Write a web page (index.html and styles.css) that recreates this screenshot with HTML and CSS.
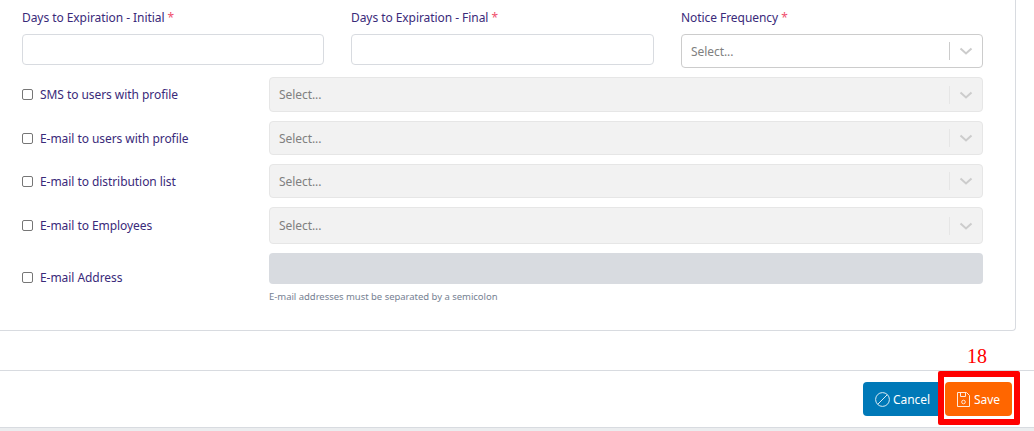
FILE: index.html
```html
<!DOCTYPE html>
<html lang="en">
<head>
<meta charset="utf-8">
<title>Notice settings</title>
<link rel="stylesheet" href="styles.css">
</head>
<body>
<main class="page">
  <section class="card">
    <div class="top-row">
      <div class="field">
        <label class="label">Days to Expiration - Initial <span class="req">*</span></label>
        <div class="input"></div>
      </div>
      <div class="field">
        <label class="label">Days to Expiration - Final <span class="req">*</span></label>
        <div class="input"></div>
      </div>
      <div class="field">
        <label class="label">Notice Frequency <span class="req">*</span></label>
        <div class="select active">
          <span class="ph">Select...</span><span class="sep"></span>
          <svg class="chev" viewBox="0 0 20 20"><path d="M4.5 7.5 10 12.5 15.5 7.5" /></svg>
        </div>
      </div>
    </div>
    <div class="row r1">
      <label class="check"><span class="box"></span>SMS to users with profile</label>
      <div class="select off"><span class="ph">Select...</span><span class="sep"></span><svg class="chev" viewBox="0 0 20 20"><path d="M4.5 7.5 10 12.5 15.5 7.5" /></svg></div>
    </div>
    <div class="row r2">
      <label class="check"><span class="box"></span>E-mail to users with profile</label>
      <div class="select off"><span class="ph">Select...</span><span class="sep"></span><svg class="chev" viewBox="0 0 20 20"><path d="M4.5 7.5 10 12.5 15.5 7.5" /></svg></div>
    </div>
    <div class="row r3">
      <label class="check"><span class="box"></span>E-mail to distribution list</label>
      <div class="select off"><span class="ph">Select...</span><span class="sep"></span><svg class="chev" viewBox="0 0 20 20"><path d="M4.5 7.5 10 12.5 15.5 7.5" /></svg></div>
    </div>
    <div class="row r4">
      <label class="check"><span class="box"></span>E-mail to Employees</label>
      <div class="select off"><span class="ph">Select...</span><span class="sep"></span><svg class="chev" viewBox="0 0 20 20"><path d="M4.5 7.5 10 12.5 15.5 7.5" /></svg></div>
    </div>
    <div class="row r5">
      <label class="check"><span class="box"></span>E-mail Address</label>
      <div class="email-col">
        <div class="input-off"></div>
        <p class="hint">E-mail addresses must be separated by a semicolon</p>
      </div>
    </div>
  </section>
  <footer class="footer">
    <button class="btn cancel">
      <svg class="ico ico-cancel" viewBox="0 0 15 15"><circle cx="7.5" cy="7.5" r="6.9"/><path d="M2.7 12.3 12.3 2.7"/></svg>Cancel
    </button>
    <button class="btn save">
      <svg class="ico ico-save" viewBox="0 0 13 15"><path d="M.5.5h9l3 3v11H.5z"/><path d="M3.5.5v4h5v-4"/><circle cx="6.5" cy="10" r="1.8"/></svg>Save
    </button>
    <div class="marker"><span class="marker-num">18</span></div>
  </footer>
  <div class="strip"></div>
</main>
</body>
</html>
```
FILE: styles.css
```css
* { box-sizing: border-box; }
html, body { margin: 0; height: 431px; overflow: hidden; background: #fff; }
body { font-family: "Noto Sans", "Liberation Sans", sans-serif; font-size: 12px; letter-spacing: -.06px; color: #3a2a7a; }
.page { width: 1034px; height: 431px; display: flex; flex-direction: column; }
.card {
  width: 1016px; height: 331px;
  border: 1px solid #d8dbe0; border-top: 0; border-left: 0;
  border-bottom-right-radius: 4px;
  padding: 9px 32px 0 22px;
}
.top-row { display: grid; grid-template-columns: 302px 303px 302px; column-gap: 27px; height: 59px; }
.field { display: flex; flex-direction: column; }
.label { height: 25px; line-height: 17px; color: #3a2a7a; }
.req { color: #f0506e; }
.input { height: 31px; border: 1px solid #d8dbe0; border-radius: 4px; background: #fff; }
.select {
  display: flex; align-items: center; border: 1px solid #ccc; border-radius: 4px;
  padding-left: 9px; background: #fff; height: 34px;
}
.ph { flex: 1; color: #808080; }
.sep { width: 1px; height: 18px; background: #ccc; }
.chev { width: 20px; height: 20px; margin: 0 6px 0 6px; fill: none; stroke: #ccc; stroke-width: 2; }
.select.off { background: #f2f2f2; border-color: #e6e6e6; flex: 1; height: 100%; }
.select.off .sep { background: #e6e6e6; }
.row { display: flex; align-items: center; }
.r1 { margin-top: 9px; height: 35px; }
.r2 { margin-top: 9px; height: 34px; }
.r3 { margin-top: 9px; height: 34px; }
.r4 { margin-top: 9px; height: 37px; }
.r5 { margin-top: 9px; height: 60px; align-items: flex-start; }
.check { width: 247px; display: flex; align-items: center; color: #3a2a7a; }
.r5 .check { margin-top: 16px; }
.box { width: 11px; height: 11px; border: 1px solid #767676; border-radius: 2px; margin-right: 7px; background: #fff; flex: none; }
.email-col { flex: 1; }
.input-off { height: 31px; background: #d8dbe0; border-radius: 4px; }
.hint { margin: 7px 0 0; font-size: 9.5px; letter-spacing: -.03px; line-height: 12px; color: #768192; }
.footer {
  position: relative; margin-top: 39px; height: 58px;
  border-top: 1px solid #d8dbe0; border-bottom: 1px solid #d8dbe0;
  display: flex; justify-content: flex-end; gap: 3px; padding: 11px 22px 0 0;
}
.btn {
  height: 34px; border: 0; color: #fff; font: 12px "Noto Sans", "Liberation Sans", sans-serif; letter-spacing: -.06px;
  display: flex; align-items: center; justify-content: center; border-radius: 4px; padding: 0;
}
.cancel { width: 79px; background: #0079b8; }
.save { width: 67px; background: #ff6600; position: relative; }
.ico { height: 15px; margin-right: 3px; fill: none; stroke: #fff; stroke-width: 1; opacity: .85; }
.ico-cancel { width: 15px; }
.ico-save { width: 13px; margin-right: 4px; }
.marker {
  position: absolute; left: 938px; top: 0; width: 82px; height: 54px;
  border: 6px solid #f00; border-radius: 2px;
}
.marker-num {
  position: absolute; left: 23px; top: -32px; color: #f00;
  font: 20px "Liberation Serif", serif;
}
.strip { height: 3px; background: #ebedef; }
```
